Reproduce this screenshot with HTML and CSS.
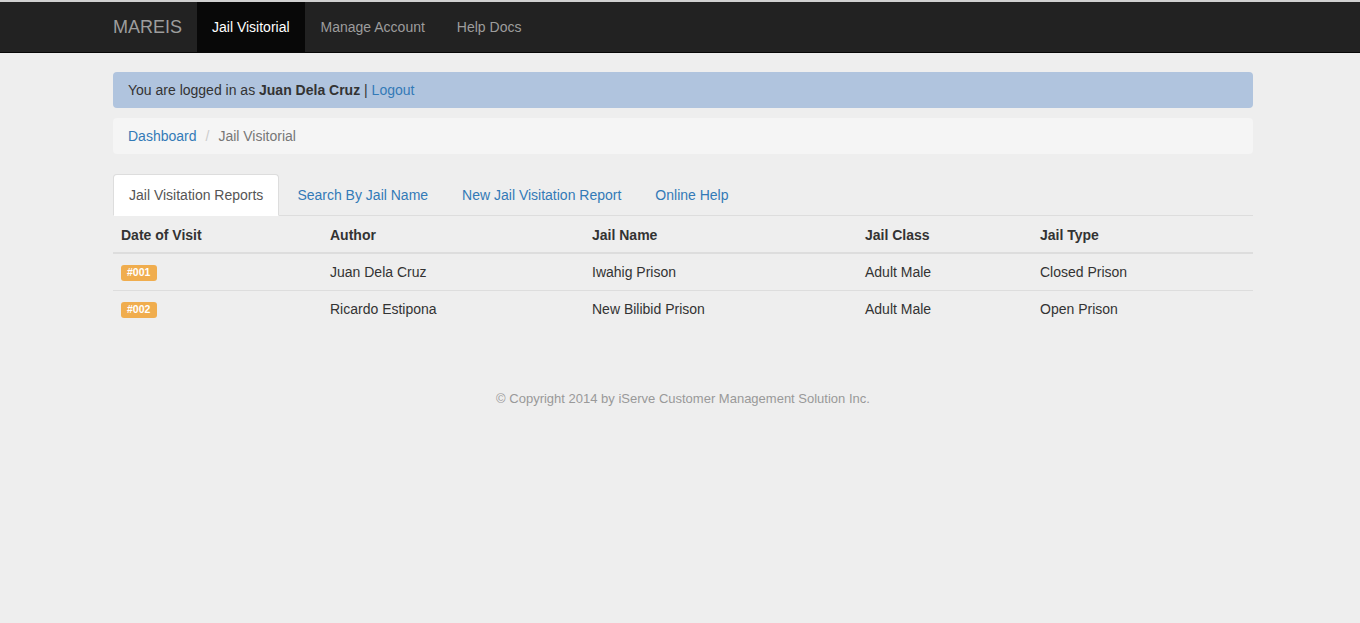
FILE: index.html
```html
<!DOCTYPE html>
<html>
<head>
<meta charset="utf-8">
<link rel="stylesheet" href="styles.css">
</head>
<body>
<div class="topline"></div>
<nav class="navbar">
  <div class="container nav-inner">
    <a class="brand" href="#">MAREIS</a>
    <ul class="nav">
      <li class="active"><a href="#">Jail Visitorial</a></li>
      <li><a href="#">Manage Account</a></li>
      <li><a href="#">Help Docs</a></li>
    </ul>
  </div>
</nav>
<main class="container">
  <div class="alert">You are logged in as <b>Juan Dela Cruz</b> | <a href="#">Logout</a></div>
  <ol class="breadcrumb">
    <li><a href="#">Dashboard</a></li>
    <li class="sep">/</li>
    <li class="current">Jail Visitorial</li>
  </ol>
  <ul class="tabs">
    <li class="active"><a href="#">Jail Visitation Reports</a></li>
    <li><a href="#">Search By Jail Name</a></li>
    <li><a href="#">New Jail Visitation Report</a></li>
    <li><a href="#">Online Help</a></li>
  </ul>
  <table class="table">
    <thead>
      <tr>
        <th class="c1">Date of Visit</th>
        <th class="c2">Author</th>
        <th class="c3">Jail Name</th>
        <th class="c4">Jail Class</th>
        <th class="c5">Jail Type</th>
      </tr>
    </thead>
    <tbody>
      <tr>
        <td><span class="label">#001</span></td>
        <td>Juan Dela Cruz</td>
        <td>Iwahig Prison</td>
        <td>Adult Male</td>
        <td>Closed Prison</td>
      </tr>
      <tr>
        <td><span class="label">#002</span></td>
        <td>Ricardo Estipona</td>
        <td>New Bilibid Prison</td>
        <td>Adult Male</td>
        <td>Open Prison</td>
      </tr>
    </tbody>
  </table>
  <footer class="footer">&copy; Copyright 2014 by iServe Customer Management Solution Inc.</footer>
</main>
</body>
</html>
```

FILE: styles.css
```css
* { box-sizing: border-box; }
html, body { margin: 0; padding: 0; }
body {
  background: #eeeeee;
  font-family: "Liberation Sans", Arial, sans-serif;
  font-size: 14px;
  line-height: 20px;
  color: #333;
}
a { text-decoration: none; color: #337ab7; }
.container { width: 1140px; margin-left: 113px; }
.topline { height: 2px; background: #d0d0d0; }
.navbar {
  background: #222;
  border-bottom: 1px solid #080808;
  height: 51px;
}
.nav-inner { display: flex; height: 50px; }
.brand {
  font-size: 18px;
  line-height: 20px;
  color: #9d9d9d;
  padding: 15px 15px 15px 0;
}
.nav { list-style: none; margin: 0; padding: 0; display: flex; }
.nav a {
  display: block;
  padding: 15px;
  line-height: 20px;
  color: #9d9d9d;
}
.nav .active a { background: #080808; color: #fff; }
.nav li + li a { padding-left: 16px; padding-right: 16px; }
.alert {
  margin-top: 19px;
  background: #b0c4de;
  border-radius: 4px;
  padding: 8px 15px;
  height: 36px;
  color: #333;
}
.breadcrumb {
  list-style: none;
  margin: 10px 0 20px;
  padding: 8px 15px;
  height: 36px;
  background: #f5f5f5;
  border-radius: 4px;
  display: flex;
}
.breadcrumb .sep { color: #ccc; padding: 0 9px 0 9px; }
.breadcrumb .current { color: #777; }
.tabs {
  list-style: none;
  margin: 0;
  padding: 0;
  display: flex;
  border-bottom: 1px solid #ddd;
  height: 42px;
}
.tabs li { margin-right: 2px; margin-bottom: -1px; }
.tabs a {
  display: block;
  padding: 10px 15px;
  line-height: 20px;
  border: 1px solid transparent;
  border-radius: 4px 4px 0 0;
  color: #337ab7;
}
.tabs .active a {
  background: #fff;
  border-color: #ddd #ddd transparent;
  color: #555;
}
.table { width: 100%; border-collapse: collapse; }
.table th, .table td {
  padding: 8px;
  text-align: left;
  line-height: 20px;
  vertical-align: top;
}
.table th { border-bottom: 2px solid #ddd; font-weight: bold; padding-top: 9px; padding-bottom: 7px; }
.table tbody tr + tr td { border-top: 1px solid #ddd; }
.c1 { width: 209px; }
.c2 { width: 262px; }
.c3 { width: 273px; }
.c4 { width: 175px; }
.label {
  display: inline-block;
  background: #f0ad4e;
  color: #fff;
  font-weight: bold;
  font-size: 10.5px;
  line-height: 1;
  padding: 2.5px 6.5px 3.5px 6px;
  border-radius: 3px;
  vertical-align: 1px;
}
.footer {
  text-align: center;
  color: #999;
  font-size: 13px;
  margin-top: 62px;
}
```
